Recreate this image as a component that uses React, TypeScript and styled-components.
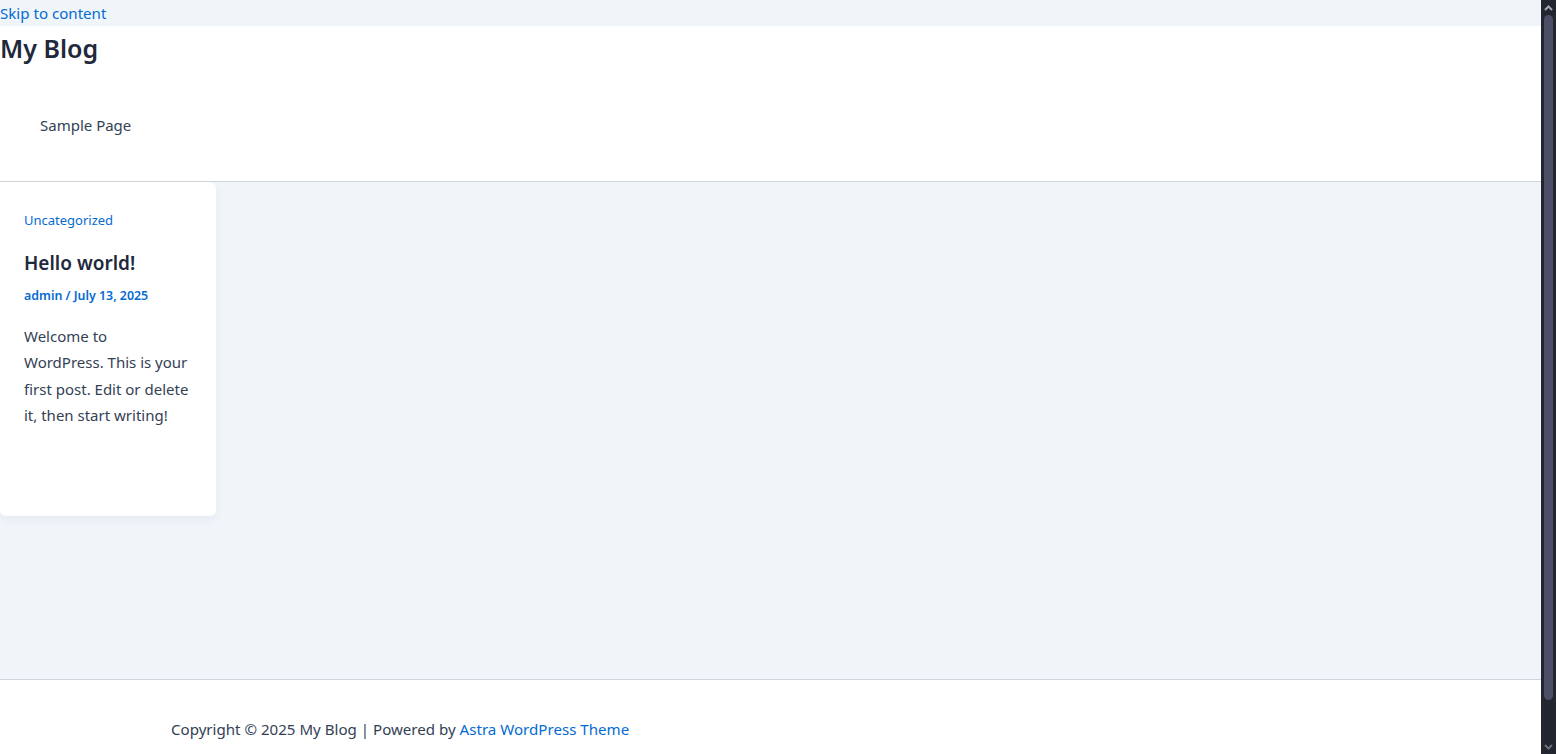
import styled, { createGlobalStyle } from "styled-components";

const GlobalStyle = createGlobalStyle`
  html, body {
    background: #f0f5fa;
  }
  body {
    margin: 0;
    font-family: "Noto Sans", "Open Sans", sans-serif;
    color: #334155;
  }
  a {
    text-decoration: none;
    color: #046bd2;
  }
`;

const Page = styled.div`
  margin-right: 15px;
`;

const SkipBar = styled.div`
  height: 26px;
  background: #f0f5fa;
  font-size: 15.1px;
  line-height: 26px;
`;

const Header = styled.header`
  background: #fff;
  border-bottom: 1px solid #d1d5db;
  height: 155px;
  display: flex;
  flex-direction: column;
`;

const SiteTitle = styled.h1`
  margin: 0;
  padding-top: 5px;
  font-size: 25px;
  line-height: 34px;
  font-weight: 600;
  color: #1e293b;
`;

const Nav = styled.nav`
  display: flex;
  padding: 48px 0 0 40px;
`;

const NavLink = styled.a`
  font-size: 15px;
  color: #334155;
  line-height: 24px;
`;

const Main = styled.main`
  background: #f0f5fa;
  height: 497px;
  display: flex;
  align-items: flex-start;
`;

const Card = styled.article`
  width: 216px;
  height: 334px;
  box-sizing: border-box;
  background: #fff;
  border-radius: 0 6px 6px 6px;
  box-shadow: 0 4px 10px rgba(40, 60, 90, 0.06);
  padding: 29px 24px 0;
  display: flex;
  flex-direction: column;
`;

const Category = styled.a`
  font-size: 13px;
  line-height: 18px;
`;

const PostTitle = styled.h2`
  margin: 20px 0 0;
  font-size: 19px;
  line-height: 28px;
  font-weight: 600;
  color: #1e293b;
`;

const Meta = styled.div`
  margin-top: 10px;
  font-size: 12.4px;
  line-height: 18px;
  font-weight: 600;
  color: #046bd2;
`;

const Excerpt = styled.p`
  margin: 18px 0 0;
  font-size: 15px;
  line-height: 26.4px;
  color: #334155;
  white-space: nowrap;
`;

const Footer = styled.footer`
  background: #fff;
  border-top: 1px solid #d1d5db;
  height: 100px;
  box-sizing: border-box;
  padding: 37px 0 0 171px;
  font-size: 15.1px;
  line-height: 24px;
  color: #334155;
`;

const ScrollTrack = styled.div`
  position: fixed;
  top: 0;
  right: 0;
  width: 15px;
  height: 100vh;
  background: #23262f;
  display: flex;
  flex-direction: column;
  align-items: center;
`;

const ScrollArrow = styled.div`
  height: 15px;
  display: flex;
  align-items: center;
  justify-content: center;
`;

const ScrollThumb = styled.div`
  flex: 1;
  width: 9px;
  margin: 0 0 39px;
  background: #4b4e66;
  border-radius: 5px;
`;

export default function App() {
  return (
    <>
      <GlobalStyle />
      <Page>
        <SkipBar>
          <a href="#content">Skip to content</a>
        </SkipBar>
        <Header>
          <SiteTitle>My Blog</SiteTitle>
          <Nav>
            <NavLink href="#">Sample Page</NavLink>
          </Nav>
        </Header>
        <Main id="content">
          <Card>
            <Category href="#">Uncategorized</Category>
            <PostTitle>Hello world!</PostTitle>
            <Meta>admin / July 13, 2025</Meta>
            <Excerpt>
              Welcome to
              <br />
              WordPress. This is your
              <br />
              first post. Edit or delete
              <br />
              it, then start writing!
            </Excerpt>
          </Card>
        </Main>
        <Footer>
          Copyright © 2025 My Blog | Powered by <a href="#">Astra WordPress Theme</a>
        </Footer>
      </Page>
      <ScrollTrack>
        <ScrollArrow>
          <svg width="9" height="6" viewBox="0 0 9 6">
            <path d="M1 5 L4.5 1.5 L8 5" stroke="#a3a6b4" strokeWidth="2" fill="none" />
          </svg>
        </ScrollArrow>
        <ScrollThumb />
        <ScrollArrow>
          <svg width="9" height="6" viewBox="0 0 9 6">
            <path d="M1 1 L4.5 4.5 L8 1" stroke="#6b6e80" strokeWidth="2" fill="none" />
          </svg>
        </ScrollArrow>
      </ScrollTrack>
    </>
  );
}
